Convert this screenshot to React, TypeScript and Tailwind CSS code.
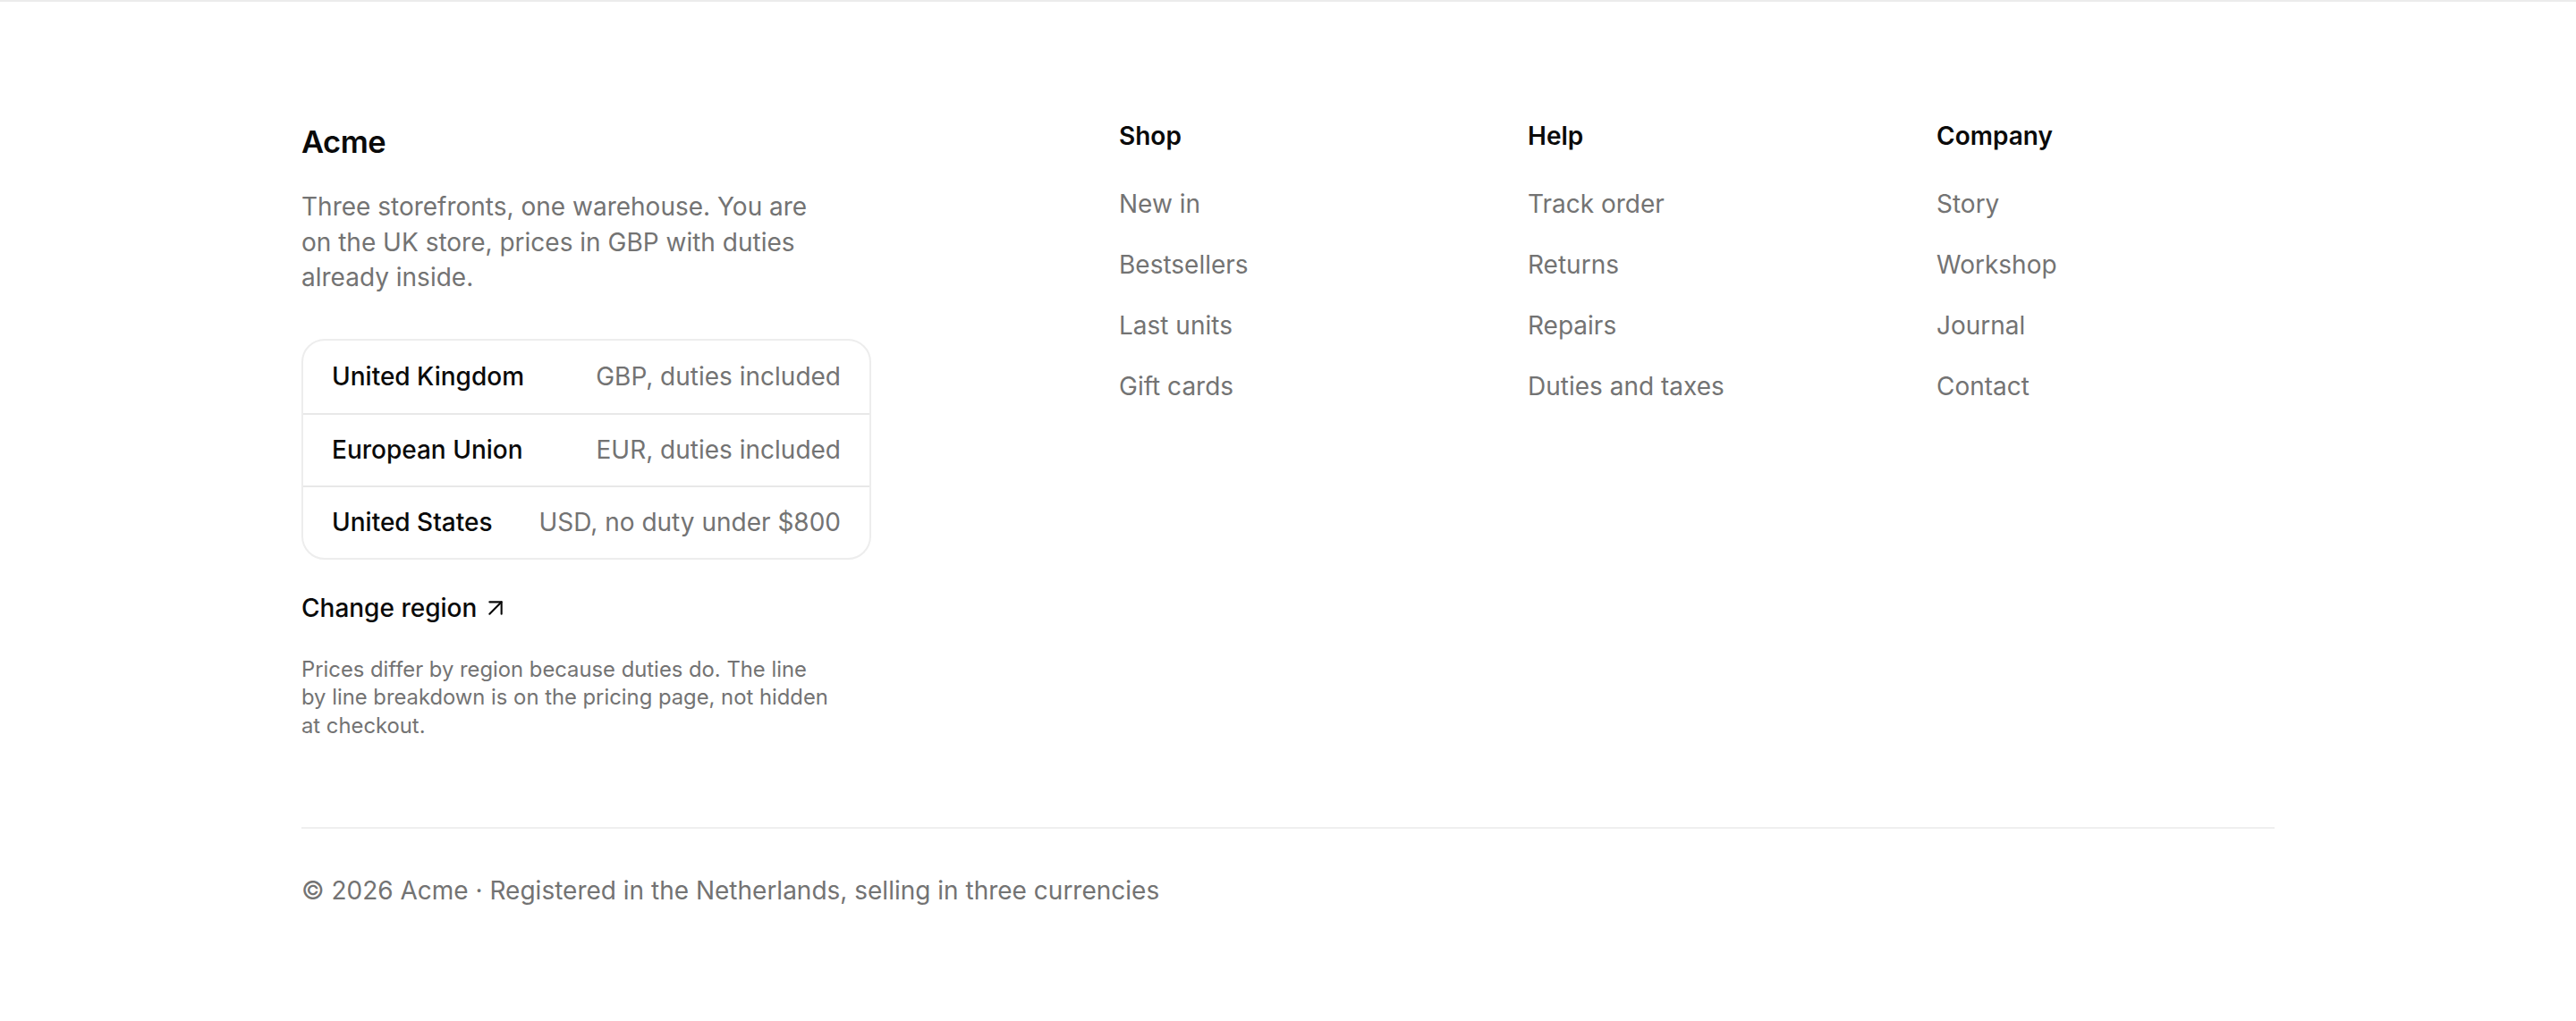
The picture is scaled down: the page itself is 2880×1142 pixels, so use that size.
import { ArrowUpRight } from 'lucide-react';

const regions = [
  { name: 'United Kingdom', note: 'GBP, duties included' },
  { name: 'European Union', note: 'EUR, duties included' },
  { name: 'United States', note: 'USD, no duty under $800' },
];

const columns = [
  { title: 'Shop', links: ['New in', 'Bestsellers', 'Last units', 'Gift cards'] },
  { title: 'Help', links: ['Track order', 'Returns', 'Repairs', 'Duties and taxes'] },
  { title: 'Company', links: ['Story', 'Workshop', 'Journal', 'Contact'] },
];

export default function App() {
  return (
    <footer
      className="min-h-screen border-t-2 border-[#ebebeb] bg-white text-[#0a0a0a]"
      style={{ fontFamily: 'Inter, "Noto Sans", sans-serif' }}
    >
      <div className="mx-auto w-[2206px] pt-[131px]">
        <div className="grid grid-cols-5 gap-x-[79px]">
          <div className="col-span-2">
            <h2 className="mt-[4px] text-[34.5px] font-semibold leading-[44px] tracking-[-0.015em]">Acme</h2>
            <p className="mt-[31px] max-w-[580px] text-[28px] leading-[39.5px] text-[#737373]">
              Three storefronts, one warehouse. You are on the UK store, prices in GBP with duties
              already inside.
            </p>

            <div className="mt-[48px] w-[637px] overflow-hidden rounded-[26px] border-2 border-[#ededed]">
              {regions.map((r, i) => (
                <div
                  key={r.name}
                  className={`flex h-[81px] items-center justify-between px-[32px] text-[28px] ${
                    i > 0 ? 'border-t-2 border-[#e8e8e8]' : ''
                  }`}
                >
                  <span className="font-medium text-[#0a0a0a]">{r.name}</span>
                  <span className="text-[#737373]">{r.note}</span>
                </div>
              ))}
            </div>

            <a href="#" className="mt-[35px] inline-flex items-center gap-[5px] text-[28px] font-medium leading-[38px]">
              Change region
              <ArrowUpRight size={32} strokeWidth={1.6} />
            </a>

            <p className="mt-[34px] max-w-[596px] text-[23.8px] leading-[31.5px] text-[#737373]">
              Prices differ by region because duties do. The line by line breakdown is on the pricing
              page, not hidden at checkout.
            </p>
          </div>

          {columns.map((col) => (
            <div key={col.title} className="mt-[2px]">
              <h3 className="text-[28px] font-semibold leading-[34px]">{col.title}</h3>
              <ul className="mt-[40px] flex flex-col gap-[29px]">
                {col.links.map((link) => (
                  <li key={link}>
                    <a href="#" className="text-[28px] leading-[39px] text-[#737373]">
                      {link}
                    </a>
                  </li>
                ))}
              </ul>
            </div>
          ))}
        </div>

        <div className="mt-[98px] border-t-2 border-[#efefef] pt-[50px]">
          <p className="text-[28px] leading-[39px] text-[#737373]">
            © 2026 Acme · Registered in the Netherlands, selling in three currencies
          </p>
        </div>
      </div>
    </footer>
  );
}
